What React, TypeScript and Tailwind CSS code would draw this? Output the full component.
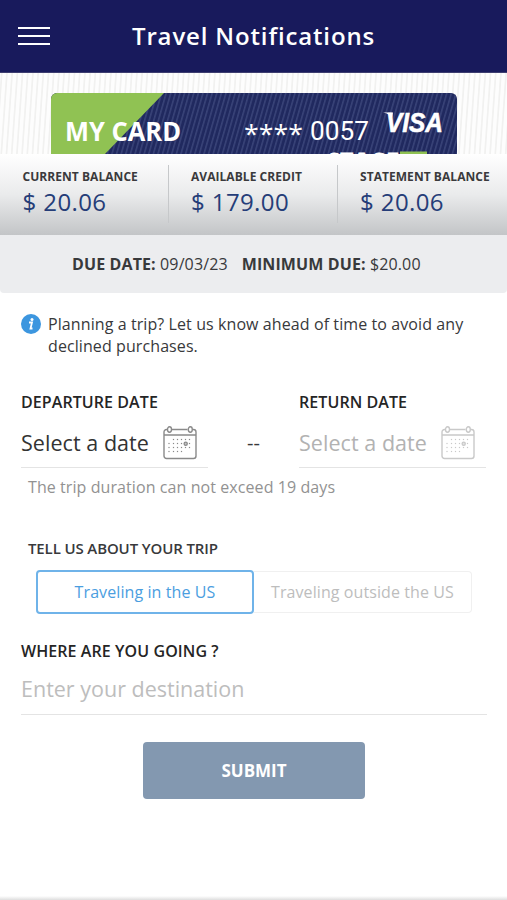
import { clsx } from 'clsx'

const balances = [
  { label: 'CURRENT BALANCE', value: '$ 20.06' },
  { label: 'AVAILABLE CREDIT', value: '$ 179.00' },
  { label: 'STATEMENT BALANCE', value: '$ 20.06' },
]

const dots = [
  { y: 13.5, xs: [10.5, 14.5, 18.5, 22.5, 26.5] },
  { y: 17.5, xs: [6, 10.5, 14.5, 18.5, 26.5] },
  { y: 21.5, xs: [6, 10.5, 14.5, 18.5, 22.5, 26.5] },
  { y: 25.5, xs: [6, 10.5, 14.5, 18.5] },
]

function CalendarIcon({ className }: { className?: string }) {
  return (
    <svg viewBox="0 0 34 34" className={clsx('h-[34px] w-[34px]', className)} fill="none" stroke="currentColor">
      <path d="M4 3.5H3.5a2.5 2.5 0 0 0-2.5 2.5V30a2.5 2.5 0 0 0 2.5 2.5h27A2.5 2.5 0 0 0 33 30V6a2.5 2.5 0 0 0-2.5-2.5H30M9 3.5h15.5M1 9h32" strokeWidth="1.4" />
      <ellipse cx="6.5" cy="3.5" rx="2" ry="2.7" strokeWidth="1.4" />
      <ellipse cx="27.3" cy="3.5" rx="2" ry="2.7" strokeWidth="1.4" />
      {dots.map((row) =>
        row.xs.map((x) => <rect key={`${x}-${row.y}`} x={x - 0.6} y={row.y - 0.6} width="1.2" height="1.2" fill="currentColor" stroke="none" />),
      )}
      <circle cx="22.7" cy="17.8" r="1.6" fill="currentColor" fillOpacity="0.5" strokeWidth="1.3" />
    </svg>
  )
}

function CardArt() {
  return (
    <svg viewBox="0 0 507 81" className="block h-[81px] w-full shrink-0" fontFamily="'Open Sans', sans-serif">
      <defs>
        <pattern id="paper" width="5.2" height="10" patternUnits="userSpaceOnUse" patternTransform="skewX(-4)">
          <rect x="1" width="1.5" height="10" fill="#f0f0ef" />
        </pattern>
        <pattern id="weave" width="4.6" height="10" patternUnits="userSpaceOnUse" patternTransform="skewX(-16)">
          <rect x="1" width="1.5" height="10" fill="#3b457a" />
        </pattern>
        <clipPath id="card">
          <rect x="51" y="20" width="406" height="90" rx="6" />
        </clipPath>
      </defs>
      <rect width="507" height="81" fill="#fdfdfd" />
      <rect width="507" height="81" fill="url(#paper)" />
      <g clipPath="url(#card)">
        <rect x="51" y="20" width="406" height="90" fill="#20295f" />
        <rect x="51" y="20" width="406" height="90" fill="url(#weave)" />
        <path d="M51 20H164L105 81H51Z" fill="#90c253" />
      </g>
      <g fill="#fff">
        <text x="65" y="67.5" fontSize="26" fontWeight="700" textLength="116" lengthAdjust="spacingAndGlyphs">MY CARD</text>
        <text x="244" y="70" fontSize="25" textLength="59" lengthAdjust="spacingAndGlyphs">****</text>
        <text x="310" y="67" fontFamily="Roboto, sans-serif" fontSize="26" textLength="59" lengthAdjust="spacingAndGlyphs">0057</text>
        <text x="386" y="58.5" fontFamily="'Liberation Sans', sans-serif" fontSize="27.5" fontWeight="700" fontStyle="italic" stroke="#fff" strokeWidth="0.6" textLength="57" lengthAdjust="spacingAndGlyphs">VISA</text>
        <path d="M383 39.5H393L392 45Q390 40.5 383 39.5Z" />
        <text x="327" y="103" fontSize="31" fontWeight="800" stroke="#fff" strokeWidth="0.8" textLength="72" lengthAdjust="spacingAndGlyphs">STAGE</text>
      </g>
      <rect x="400" y="78.5" width="27" height="3" fill="#90c253" />
    </svg>
  )
}

function DateField({ label, muted }: { label: string; muted?: boolean }) {
  return (
    <div className="w-[187px]">
      <div className="text-base leading-5 font-semibold tracking-[0.08px] whitespace-nowrap text-[#252525]">{label}</div>
      <button className={clsx('mt-3 flex h-[44px] w-full items-start border-b border-[#e4e4e4]', muted ? 'text-[#b2b2b2]' : 'text-[#333]')}>
        <span className="w-[142px] text-left text-[21.5px] leading-[38px] tracking-[0.05px] whitespace-nowrap">Select a date</span>
        <CalendarIcon className={clsx('mt-[2px]', muted ? 'text-[#c9c9c9]' : 'text-[#8a8a8a]')} />
      </button>
    </div>
  )
}

export default function App() {
  return (
    <div className="flex h-[900px] w-[507px] flex-col overflow-hidden bg-white font-['Open_Sans',sans-serif] text-[#38393b]">
      {/* Header */}
      <header className="flex h-[73px] shrink-0 items-center border-b border-[#3e3e70] bg-[#181a5c]">
        <button aria-label="Menu" className="ml-[18px] flex w-8 flex-col gap-[6px]">
          <span className="h-[2px] bg-white" />
          <span className="h-[2px] bg-white" />
          <span className="h-[2px] bg-white" />
        </button>
        <h1 className="ml-[82px] text-2xl font-[550] tracking-[0.85px] whitespace-nowrap text-white">Travel Notifications</h1>
      </header>

      <CardArt />

      {/* Balances */}
      <section className="flex h-[81px] shrink-0 bg-linear-to-b from-white via-[#eaebec] to-[#c3c5c7] pt-[11px]">
        {balances.map((item, i) => (
          <div key={item.label} className={clsx('h-[58px] shrink-0', i === 0 ? 'w-[168px]' : 'w-[169px] border-l border-[#c6c8ca]')}>
            <div className={i > 0 ? 'pl-[22px]' : 'pl-[22.5px]'}>
              <div className="pt-[3px] text-[12px] leading-[18px] font-bold tracking-[0.05px] whitespace-nowrap text-[#3a3a3c]">{item.label}</div>
              <div className="text-2xl leading-[32px] tracking-[0.4px] whitespace-nowrap text-[#253d78]">{item.value}</div>
            </div>
          </div>
        ))}
      </section>

      {/* Due date */}
      <section className="flex h-[58px] shrink-0 items-center rounded-b bg-[#ecedef] pl-[72px] text-base tracking-[0.12px] whitespace-nowrap">
        <span><b>DUE DATE:</b> 09/03/23</span>
        <span className="ml-[14px]"><b>MINIMUM DUE:</b> $20.00</span>
      </section>

      <main className="flex flex-col pr-5 pl-[21px]">
        <div className="mt-5 flex">
          <svg viewBox="0 0 20 20" className="mt-[1px] mr-[7px] h-5 w-5 shrink-0">
            <circle cx="10" cy="10" r="10" fill="#3c96df" />
            <circle cx="11" cy="5.5" r="1.5" fill="#fff" />
            <path d="M8 8.5H11L9.5 14.5H11.5" fill="none" stroke="#fff" strokeWidth="1.8" />
          </svg>
          <p className="text-base leading-[22px] tracking-[0.09px] whitespace-nowrap">
            Planning a trip? Let us know ahead of time to avoid any
            <br />
            declined purchases.
          </p>
        </div>

        <div className="mt-[35px] flex">
          <DateField label="DEPARTURE DATE" />
          <span className="w-[91px] pt-[39px] text-center text-xl leading-6">--</span>
          <DateField label="RETURN DATE" muted />
        </div>
        <p className="mt-2 ml-[7px] text-base leading-[22px] tracking-[0.08px] text-[#929292]">The trip duration can not exceed 19 days</p>

        <h2 className="mt-10 ml-[7px] text-[15px] leading-5 font-semibold tracking-[-0.12px]">TELL US ABOUT YOUR TRIP</h2>
        <div className="mt-3 ml-[15px] flex items-center text-base tracking-[0.09px]">
          <button className="h-[44px] w-[218px] rounded border-2 border-[#6fb3e9] text-[#4b9edf]">Traveling in the US</button>
          <button className="h-[42px] w-[218px] rounded-r border border-l-0 border-[#f0f0f0] text-[#bdbdbd]">Traveling outside the US</button>
        </div>

        <h2 className="mt-[27px] text-base leading-5 font-semibold tracking-[0.08px] text-[#252525]">WHERE ARE YOU GOING ?</h2>
        <input
          className="mt-[10px] h-[44px] border-b border-[#e4e4e4] pb-[8px] text-[21.5px] placeholder:text-[#bdbdbd] focus:outline-none"
          placeholder="Enter your destination"
        />

        <button className="mt-[27px] h-[57px] w-[222px] self-center rounded bg-[#8398b0] text-[17px] font-bold text-white">SUBMIT</button>
      </main>

      <div className="mt-auto h-[4px] bg-linear-to-b from-white to-[#dedede]" />
    </div>
  )
}
